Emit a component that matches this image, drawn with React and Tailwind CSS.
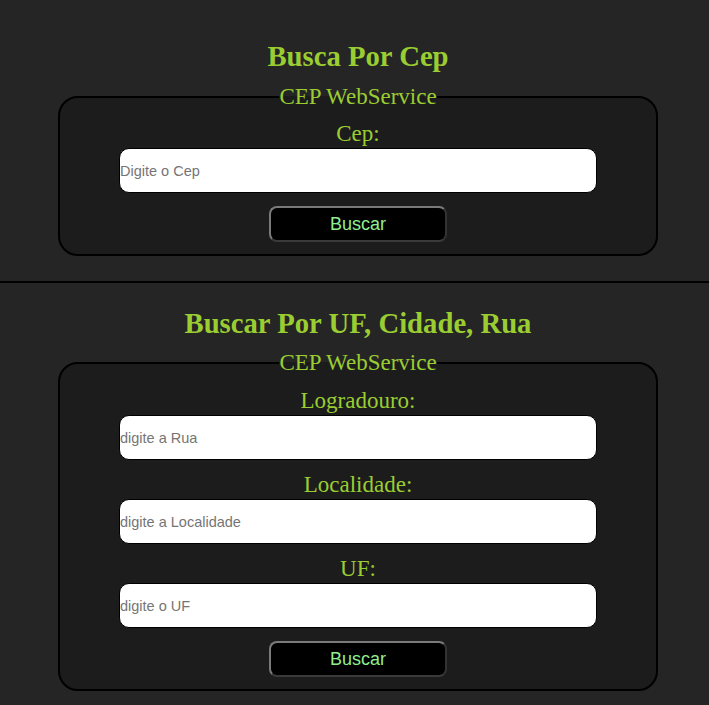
import React from "react";

const serif = "font-['Liberation_Serif',serif]";

function Field({ label, placeholder, first }) {
  return (
    <div className={`flex flex-col items-center ${first ? "" : "mt-[12px]"}`}>
      <label className={`${serif} text-[23px] leading-[26px] text-[#9acd32]`}>{label}</label>
      <input
        type="text"
        placeholder={placeholder}
        className="mt-[1px] h-[45px] w-[478px] rounded-[10px] border border-black bg-white font-['Liberation_Sans',sans-serif] text-[14.5px] text-black placeholder:text-[#757575] outline-none"
      />
    </div>
  );
}

function Card({ children, top }) {
  return (
    <fieldset className={`mx-auto w-[600px] rounded-[20px] border-2 border-black bg-[#1c1c1c] px-0 pb-[12px] ${top}`}>
      <legend className={`mx-auto ${serif} text-[23px] leading-[26px] text-[#9acd32]`}>CEP WebService</legend>
      <div className="flex flex-col items-center">
        {children}
        <button className="mt-[13px] h-[36px] w-[178px] rounded-[8px] border-2 border-[#7a7a7a] border-r-[#333333] border-b-[#3a3a3a] bg-black font-['Liberation_Sans',sans-serif] text-[18px] text-[#90ee90]">
          Buscar
        </button>
      </div>
    </fieldset>
  );
}

export default function App() {
  return (
    <div className="min-h-[705px] bg-[#252525]">
      <div className="pl-[7px] pt-[40px]">
        <h1 className={`${serif} text-center text-[28.7px] leading-[32px] font-bold text-[#9acd32]`}>Busca Por Cep</h1>
        <div className="mt-[12px]">
          <Card top="pt-[11px]">
            <Field first label="Cep:" placeholder="Digite o Cep" />
          </Card>
        </div>
      </div>
      <div className="mt-[25px] h-[2px] w-full bg-black" />
      <div className="pl-[7px] pt-[24px] pb-[14px]">
        <h1 className={`${serif} text-center text-[28.7px] leading-[32px] font-bold text-[#9acd32]`}>Buscar Por UF, Cidade, Rua</h1>
        <div className="mt-[11px]">
          <Card top="pt-[12px]">
            <Field first label="Logradouro:" placeholder="digite a Rua" />
            <Field label="Localidade:" placeholder="digite a Localidade" />
            <Field label="UF:" placeholder="digite o UF" />
          </Card>
        </div>
      </div>
    </div>
  );
}
